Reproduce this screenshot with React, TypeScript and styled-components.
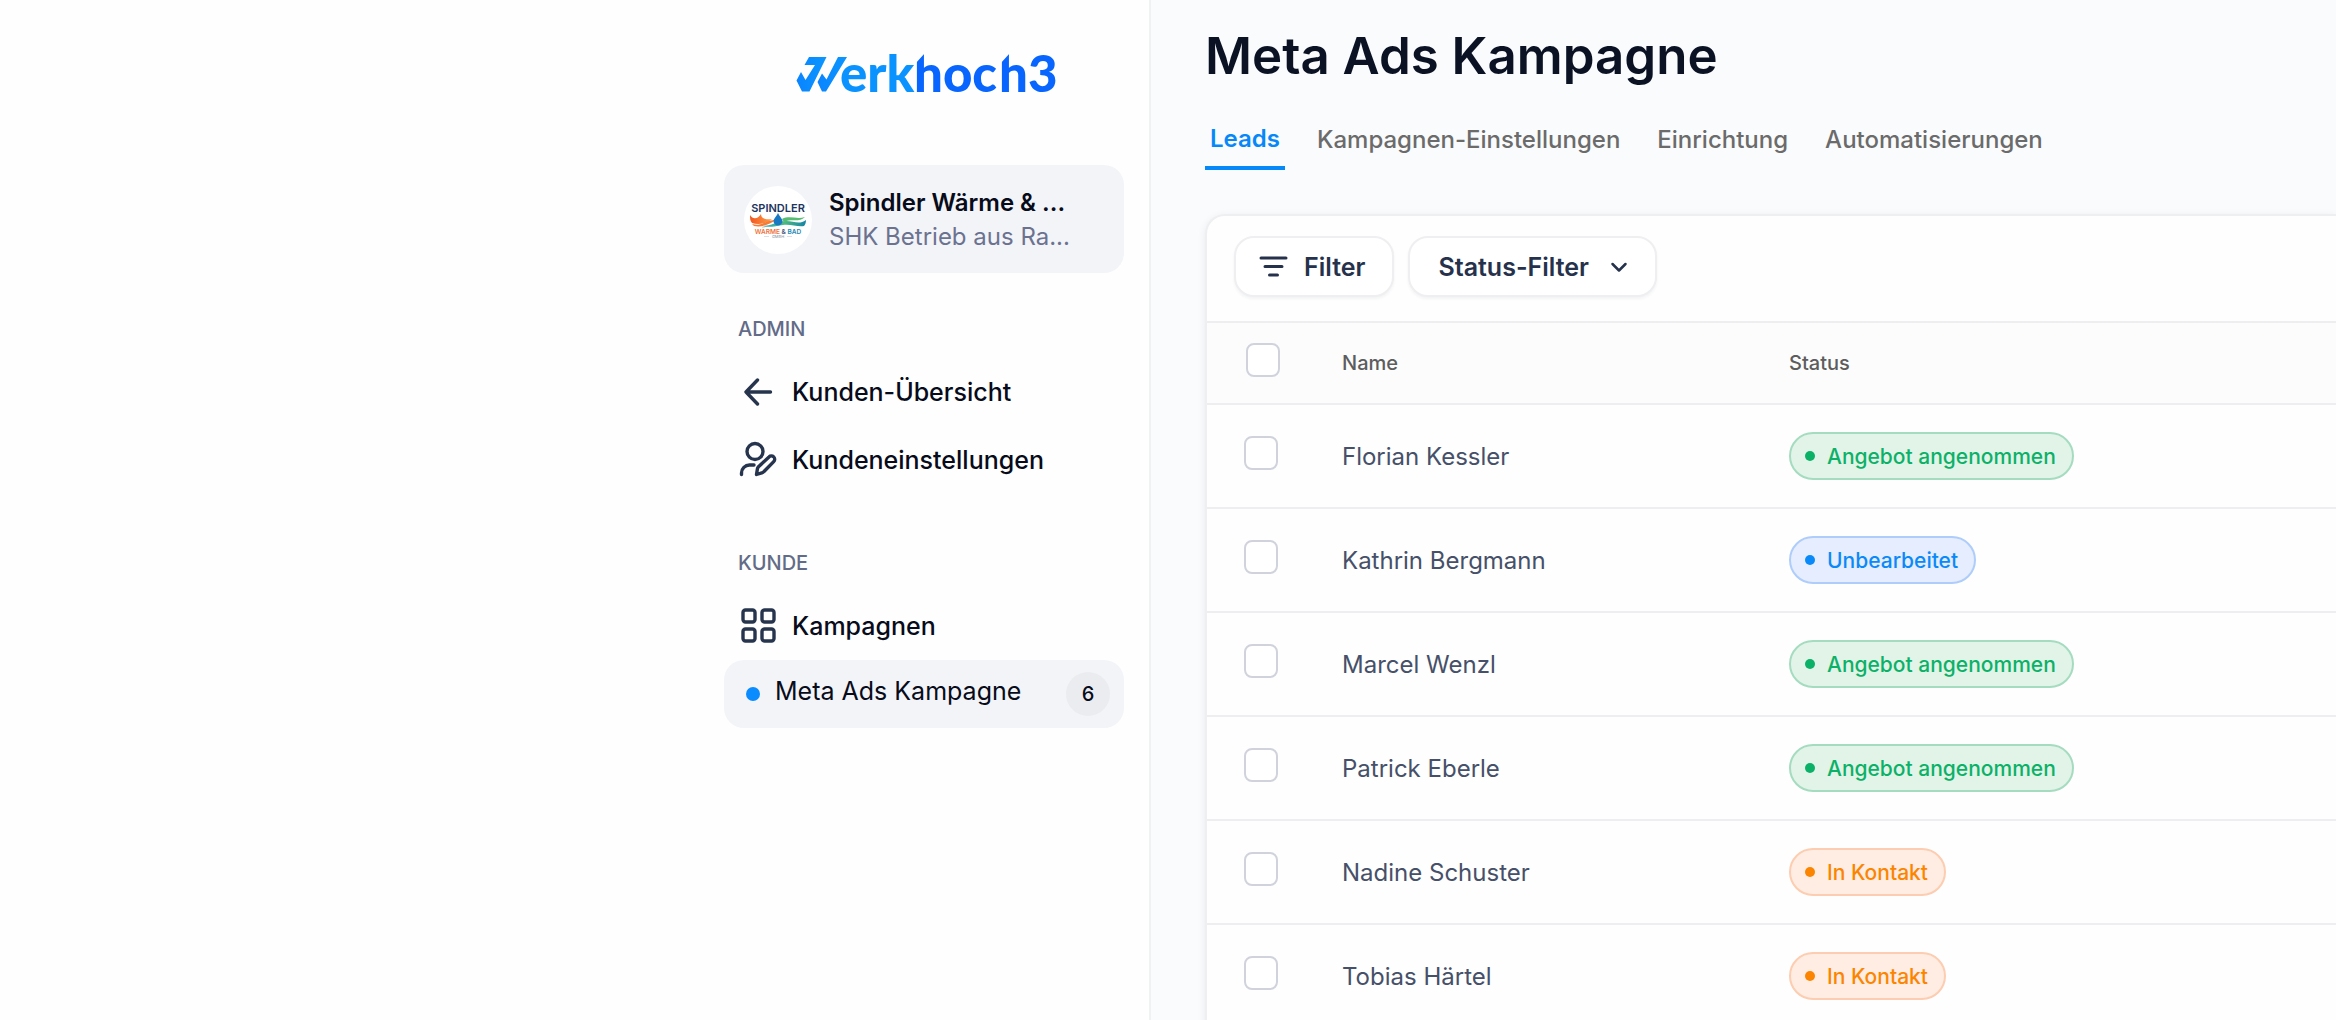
import React from "react";
import styled, { createGlobalStyle } from "styled-components";

const GlobalStyle = createGlobalStyle`
  *, *::before, *::after { box-sizing: border-box; }
  body {
    margin: 0;
    background: #ffffff;
    color: #070b1a;
    font-family: Inter, "Liberation Sans", sans-serif;
  }
  button, select, input { font: inherit; color: inherit; margin: 0; }
`;

const Shell = styled.div`
  display: grid;
  grid-template-columns: minmax(450px, 1151fr) minmax(0, 1185fr);
  height: 100vh;
  overflow: hidden;
`;

/* ---------- Sidebar ---------- */

const Sidebar = styled.aside`
  display: flex;
  justify-content: flex-end;
  padding: 0 25px;
  border-right: 2px solid #f0f1f3;
  background: #fefefe;
`;

const SidebarInner = styled.div`
  display: flex;
  flex-direction: column;
  width: 400px;
`;

const LogoLink = styled.a`
  display: flex;
  justify-content: center;
  height: 165px;
  padding-top: 40px;
`;

const CustomerCard = styled.button`
  display: flex;
  align-items: center;
  gap: 17px;
  height: 108px;
  padding: 2px 20px 0;
  border: 0;
  border-radius: 20px;
  background: #f3f4f8;
  text-align: left;
`;

const Avatar = styled.svg`
  flex: none;
  width: 68px;
  height: 68px;
`;

const CustomerText = styled.span`
  display: flex;
  flex-direction: column;
  min-width: 0;
`;

const CustomerLine = styled.span<{ $muted?: boolean }>`
  overflow: hidden;
  text-overflow: ellipsis;
  white-space: nowrap;
  font-size: 24px;
  line-height: 34px;
  font-weight: ${(p) => (p.$muted ? 400 : 600)};
  color: ${(p) => (p.$muted ? "#6b7290" : "#070b1a")};
`;

const NavGroup = styled.nav`
  display: flex;
  flex-direction: column;
  padding-top: 40px;
  & + & { padding-top: 53px; }
`;

const NavTitle = styled.h2`
  margin: 0 0 13px;
  padding: 0 14px;
  font-size: 20px;
  line-height: 32px;
  font-weight: 500;
  color: #626b87;
`;

const NavLink = styled.a`
  display: flex;
  align-items: center;
  gap: 14px;
  height: 68px;
  padding: 0 14px;
  font-size: 25px;
  line-height: 32px;
  font-weight: 500;
  color: #070b1a;
  text-decoration: none;
`;

const NavIcon = styled.svg`
  flex: none;
  width: 40px;
  height: 40px;
  fill: none;
  stroke: #26344d;
  stroke-width: 3.400;
  stroke-linecap: round;
  stroke-linejoin: round;
`;

const ActiveLink = styled(NavLink)`
  gap: 15px;
  padding: 0 14px 0 22px;
  border-radius: 20px;
  background: #f3f4f8;
  font-weight: 400;
`;

const ActiveLabel = styled.span`
  padding-bottom: 6px;
`;

const Dot = styled.span<{ $size: number; $color: string }>`
  flex: none;
  width: ${(p) => p.$size}px;
  height: ${(p) => p.$size}px;
  border-radius: 50%;
  background: ${(p) => p.$color};
`;

const Count = styled.span`
  display: grid;
  place-items: center;
  width: 44px;
  height: 44px;
  margin-left: auto;
  border-radius: 50%;
  background: #ebecef;
  font-size: 20px;
  font-weight: 500;
`;

/* ---------- Main ---------- */

const Main = styled.main`
  display: flex;
  flex-direction: column;
  padding: 21px 0 0 54px;
  background: #fafbfd;
`;

const Title = styled.h1`
  margin: 0;
  font-size: 51px;
  line-height: 70px;
  font-weight: 600;
  color: #0a1224;
`;

const Tabs = styled.div`
  display: flex;
  gap: 27px;
  padding: 25px 0 44px;
`;

const Tab = styled.button<{ $active?: boolean }>`
  height: 54px;
  padding: 0 5px ${(p) => (p.$active ? 5 : 2)}px;
  border: 0;
  border-bottom: 4px solid ${(p) => (p.$active ? "#0788f8" : "transparent")};
  background: none;
  font-size: 24px;
  line-height: 36px;
  font-weight: ${(p) => (p.$active ? 600 : 500)};
  color: ${(p) => (p.$active ? "#0788f8" : "#6b6b6b")};
  white-space: nowrap;
`;

const Card = styled.section`
  flex: 1;
  border: 2px solid #eeeff1;
  border-right: 0;
  border-radius: 20px 0 0 0;
  background: #fefefe;
  box-shadow: 0 2px 8px rgba(20, 30, 60, 0.07);
`;

const Toolbar = styled.div`
  display: flex;
  gap: 14px;
  padding: 20px 27px 24px;
`;

const FilterButton = styled.button`
  display: flex;
  align-items: center;
  gap: 15px;
  height: 61px;
  padding: 0 27px 0 23px;
  border: 2px solid #efeff1;
  border-radius: 20px;
  background: #ffffff;
  box-shadow: 0 2px 3px rgba(20, 30, 60, 0.05);
  font-size: 25px;
  font-weight: 600;
  color: #26324c;
`;

const SelectBox = styled.div`
  display: grid;
  align-items: center;
  height: 61px;
  border: 2px solid #efeff1;
  border-radius: 20px;
  background: #ffffff;
  box-shadow: 0 2px 3px rgba(20, 30, 60, 0.05);
  color: #26324c;
  & > * { grid-area: 1 / 1; }
  & > svg { justify-self: end; margin-right: 24px; pointer-events: none; }
`;

const StatusSelect = styled.select`
  appearance: none;
  height: 57px;
  padding: 0 66px 0 28px;
  border: 0;
  border-radius: 18px;
  background: transparent;
  font-size: 25px;
  font-weight: 600;
`;

const Table = styled.table`
  width: 100%;
  border-collapse: separate;
  border-spacing: 0;
  table-layout: fixed;
`;

const CheckCol = styled.col` width: 109px; `;
const NameCol = styled.col` width: 447px; `;

const HeadCell = styled.th`
  height: 84px;
  padding: 0 26px 1px;
  border-top: 2px solid #eeeef0;
  border-bottom: 2px solid #eeeef0;
  background: #fcfcfd;
  text-align: left;
  font-size: 20px;
  font-weight: 500;
  color: #5d5d5d;
`;

const Cell = styled.td`
  height: 104px;
  padding: 0 26px;
  border-bottom: 2px solid #eeeef0;
  font-size: 24px;
  color: #465069;
`;

const HeadCheckCell = styled(HeadCell)`
  padding: 0 0 6px 39px;
`;

const CheckCell = styled(Cell)`
  padding: 0 0 7px 37px;
`;

const Checkbox = styled.input`
  appearance: none;
  display: block;
  width: 34px;
  height: 34px;
  border: 2px solid #d0d3dc;
  border-radius: 8px;
  background: #ffffff;
`;

type Tone = "green" | "blue" | "orange";

const tones: Record<Tone, { text: string; fill: string; line: string }> = {
  green: { text: "#0cb168", fill: "#e2f3e8", line: "#a5dcc0" },
  blue: { text: "#0a8af8", fill: "#e5edfe", line: "#aecdfb" },
  orange: { text: "#fb8500", fill: "#ffece2", line: "#fccdb0" },
};

const Pill = styled.span<{ $tone: Tone }>`
  display: inline-flex;
  align-items: center;
  gap: 12px;
  height: 48px;
  padding: 0 16px 0 14px;
  border: 2px solid ${(p) => tones[p.$tone].line};
  border-radius: 24px;
  background: ${(p) => tones[p.$tone].fill};
  color: ${(p) => tones[p.$tone].text};
  font-size: 21px;
  font-weight: 500;
  vertical-align: middle;
  white-space: nowrap;
`;

/* ---------- Drawings ---------- */

function Logo() {
  return (
    <svg width="272" height="66" viewBox="0 0 272 66" role="img" aria-label="Werkhoch3">
      <defs>
        <linearGradient id="mark" x1="0" x2="1">
          <stop offset="0" stopColor="#0a84ff" />
          <stop offset="1" stopColor="#0a96ff" />
        </linearGradient>
      </defs>
      <g fill="url(#mark)">
        <path d="M21 17H38.500L21.500 51.500H14L8.500 40.500L13 32L17.500 40L27 25H16.500Z" />
        <path d="M50 17H59L38 51.500H34L29.500 42L34 33.500L38.500 39.500Z" />
      </g>
      <g fontFamily="Lato, sans-serif" fontWeight="900" fontSize="51">
        <text x="52" y="52" fill="#0a93ff">erk</text>
        <text x="126" y="52" fill="#0866ff">hoc</text>
        <text x="211" y="52" fill="#0866ff">h3</text>
      </g>
      <path d="M127 13H137L127 24ZM212 13H222L212 24Z" fill="#fefefe" />
    </svg>
  );
}

function CustomerAvatar() {
  return (
    <Avatar viewBox="0 0 68 68" role="img" aria-label="Spindler Wärme & Bad GmbH">
      <defs>
        <linearGradient id="flame" x1="0" x2="1">
          <stop offset="0" stopColor="#f4561f" />
          <stop offset="1" stopColor="#fba04a" />
        </linearGradient>
        <linearGradient id="water" x1="0" x2="1">
          <stop offset="0" stopColor="#2fa9c4" />
          <stop offset="0.500" stopColor="#4dba82" />
          <stop offset="1" stopColor="#1683a8" />
        </linearGradient>
      </defs>
      <circle cx="34" cy="34" r="34" fill="#ffffff" />
      <text x="34" y="26" textAnchor="middle" fontSize="11" fontWeight="600" fill="#22355f">SPINDLER</text>
      <path d="M6 29C9 34 14 33 17 28C17 32 21 34 28 33C23 38 14 39 8 37C6 35 6 32 6 29Z" fill="url(#flame)" />
      <path d="M8 38C18 41 23 33 32 34C27 37 19 42 10 40Z" fill="#f97a35" />
      <path d="M18 40C28 40 33 35 42 35C50 35 55 39 62 34C62 37 61 39 60 40C53 41 47 38 39 39C32 40 25 42 18 40Z" fill="url(#water)" />
      <path d="M38 33C46 29 53 34 61 31C55 37 48 32 40 36Z" fill="#55bd72" />
      <path d="M34 27C36 31 38.500 33 38.500 35A4.500 4.500 0 0 1 29.500 35C29.500 33 32 31 34 27Z" fill="#1a78c2" />
      <text x="34" y="47.500" textAnchor="middle" fontSize="6.500" fontWeight="600">
        <tspan fill="#f0713a">WÄRME</tspan>
        <tspan fill="#4a5876"> &amp; </tspan>
        <tspan fill="#2389b5">BAD</tspan>
      </text>
      <path d="M20 50.500H25M43 50.500H48" stroke="#c5c9d2" strokeWidth="0.600" />
      <text x="34" y="52" textAnchor="middle" fontSize="4" fontWeight="500" fill="#9aa0ad">GMBH</text>
    </Avatar>
  );
}

const ArrowIcon = () => (
  <NavIcon viewBox="0 0 40 40" aria-hidden>
    <path d="M32.500 20H8M19.500 8L8 20L19.500 32" />
  </NavIcon>
);

const UserEditIcon = () => (
  <NavIcon viewBox="0 0 40 40" aria-hidden>
    <circle cx="17" cy="11.500" r="8" />
    <path d="M3.500 34.500V33A8 8 0 0 1 11.500 25H16" />
    <path d="M18.500 34.500L19.400 29A4 4 0 0 1 20.500 26.800L31 16.900A3.300 3.300 0 0 1 35.700 21.600L26 31.500A4 4 0 0 1 23.800 32.800Z" />
  </NavIcon>
);

const GridIcon = () => (
  <NavIcon viewBox="0 0 40 40" aria-hidden>
    <rect x="5" y="4" width="12" height="12" rx="2.500" />
    <rect x="24" y="4" width="12" height="12" rx="2.500" />
    <rect x="5" y="23" width="12" height="12" rx="2.500" />
    <rect x="24" y="23" width="12" height="12" rx="2.500" />
  </NavIcon>
);

const FilterIcon = () => (
  <svg width="30" height="30" viewBox="0 0 30 30" fill="none" stroke="currentColor" strokeWidth="3" strokeLinecap="round" aria-hidden>
    <path d="M2 6H27M6 14.500H23M10.500 23H18.500" />
  </svg>
);

const ChevronIcon = () => (
  <svg width="24" height="24" viewBox="0 0 24 24" fill="none" stroke="currentColor" strokeWidth="2.500" strokeLinecap="round" strokeLinejoin="round" aria-hidden>
    <path d="M5.500 9L12 15.500L18.500 9" />
  </svg>
);

/* ---------- Data ---------- */

const leads: { name: string; status: string; tone: Tone }[] = [
  { name: "Florian Kessler", status: "Angebot angenommen", tone: "green" },
  { name: "Kathrin Bergmann", status: "Unbearbeitet", tone: "blue" },
  { name: "Marcel Wenzl", status: "Angebot angenommen", tone: "green" },
  { name: "Patrick Eberle", status: "Angebot angenommen", tone: "green" },
  { name: "Nadine Schuster", status: "In Kontakt", tone: "orange" },
  { name: "Tobias Härtel", status: "In Kontakt", tone: "orange" },
];

const tabs = ["Leads", "Kampagnen-Einstellungen", "Einrichtung", "Automatisierungen"];

export default function App() {
  return (
    <>
      <GlobalStyle />
      <Shell>
        <Sidebar>
          <SidebarInner>
            <LogoLink href="#"><Logo /></LogoLink>
            <CustomerCard type="button">
              <CustomerAvatar />
              <CustomerText>
                <CustomerLine>Spindler Wärme &amp; ...</CustomerLine>
                <CustomerLine $muted>SHK Betrieb aus Ra...</CustomerLine>
              </CustomerText>
            </CustomerCard>
            <NavGroup aria-label="Admin">
              <NavTitle>ADMIN</NavTitle>
              <NavLink href="#"><ArrowIcon />Kunden-Übersicht</NavLink>
              <NavLink href="#"><UserEditIcon />Kundeneinstellungen</NavLink>
            </NavGroup>
            <NavGroup aria-label="Kunde">
              <NavTitle>KUNDE</NavTitle>
              <NavLink href="#"><GridIcon />Kampagnen</NavLink>
              <ActiveLink href="#" aria-current="page">
                <Dot $size={14} $color="#0a8cff" />
                <ActiveLabel>Meta Ads Kampagne</ActiveLabel>
                <Count>6</Count>
              </ActiveLink>
            </NavGroup>
          </SidebarInner>
        </Sidebar>
        <Main>
          <Title>Meta Ads Kampagne</Title>
          <Tabs role="tablist">
            {tabs.map((t, i) => (
              <Tab key={t} type="button" role="tab" aria-selected={i === 0} $active={i === 0}>{t}</Tab>
            ))}
          </Tabs>
          <Card>
            <Toolbar>
              <FilterButton type="button"><FilterIcon />Filter</FilterButton>
              <SelectBox>
                <StatusSelect aria-label="Status-Filter">
                  <option>Status-Filter</option>
                </StatusSelect>
                <ChevronIcon />
              </SelectBox>
            </Toolbar>
            <Table>
              <colgroup>
                <CheckCol />
                <NameCol />
                <col />
              </colgroup>
              <thead>
                <tr>
                  <HeadCheckCell><Checkbox type="checkbox" aria-label="Alle auswählen" /></HeadCheckCell>
                  <HeadCell>Name</HeadCell>
                  <HeadCell>Status</HeadCell>
                </tr>
              </thead>
              <tbody>
                {leads.map((lead) => (
                  <tr key={lead.name}>
                    <CheckCell><Checkbox type="checkbox" aria-label={lead.name} /></CheckCell>
                    <Cell>{lead.name}</Cell>
                    <Cell>
                      <Pill $tone={lead.tone}>
                        <Dot $size={10} $color={tones[lead.tone].text} />
                        {lead.status}
                      </Pill>
                    </Cell>
                  </tr>
                ))}
              </tbody>
            </Table>
          </Card>
        </Main>
      </Shell>
    </>
  );
}
